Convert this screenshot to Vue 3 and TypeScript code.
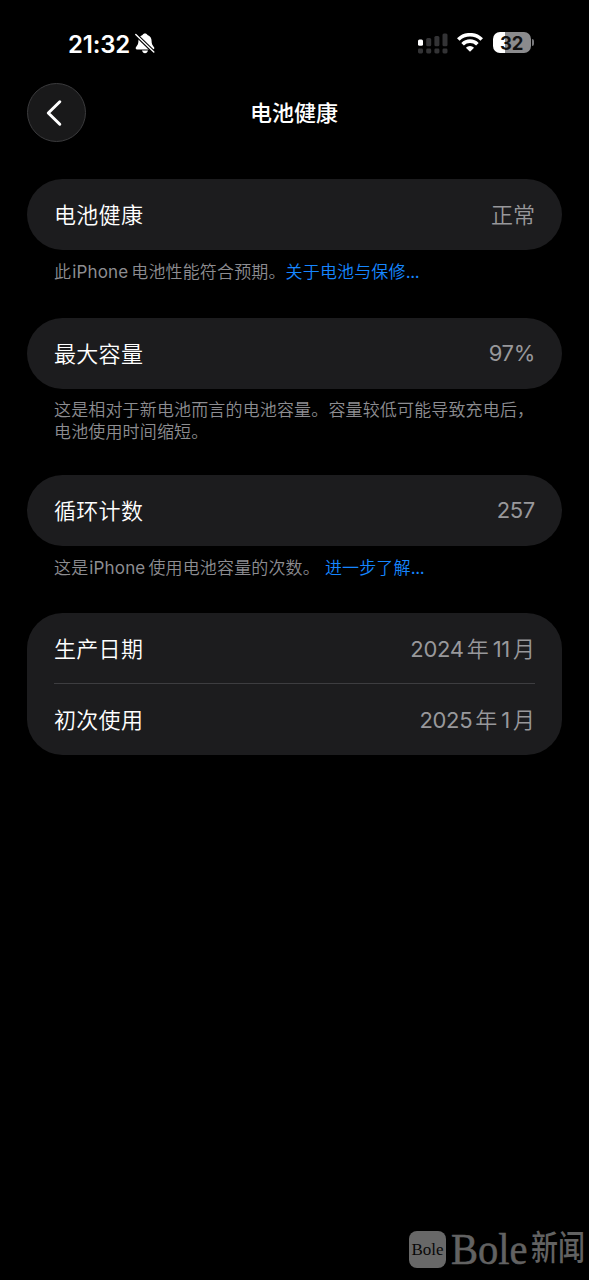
<script setup lang="ts">
interface Row {
  label: string
  value: string[]
}

interface Group {
  id: string
  rows: Row[]
  note?: string[]
  link?: string
  spaced?: boolean
}

const groups: Group[] = [
  {
    id: 'health',
    rows: [{ label: '电池健康', value: ['正常'] }],
    note: ['此', 'iPhone', '电池性能符合预期。'],
    link: '关于电池与保修',
  },
  {
    id: 'capacity',
    rows: [{ label: '最大容量', value: ['97%'] }],
    note: ['这是相对于新电池而言的电池容量。容量较低可能导致充电后，电池使用时间缩短。'],
  },
  {
    id: 'cycles',
    rows: [{ label: '循环计数', value: ['257'] }],
    note: ['这是', 'iPhone', '使用电池容量的次数。'],
    link: '进一步了解',
    spaced: true,
  },
  {
    id: 'dates',
    rows: [
      { label: '生产日期', value: ['2024', '年', '11', '月'] },
      { label: '初次使用', value: ['2025', '年', '1', '月'] },
    ],
  },
]

const isLatin = (text: string): boolean => /^[\x20-\x7e]+$/.test(text)
</script>

<template>
  <div class="screen">
    <header class="status">
      <div class="clock">
        <span class="time">21:32</span>
        <svg class="bell" width="20" height="21" viewBox="0 0 20 21">
          <path d="M10 0.4C8.8 .4 7.8 1 7.5 2C4.8 3 3.4 5.2 3.4 8C3.4 11.8 1.8 12.7 .9 14.3C.4 15.4 .8 16.4 2 16.4H18C19.2 16.4 19.6 15.4 19.1 14.3C18.2 12.7 16.6 11.8 16.6 8C16.6 5.2 15.2 3 12.5 2C12.2 1 11.2 .4 10 .4Z" fill="#fff" />
          <path d="M7 17.6H13C12.6 19.2 11.5 20.2 10 20.2S7.4 19.2 7 17.6Z" fill="#fff" />
          <path d="M.2 1L19.4 19.6" stroke="#000" stroke-width="3.6" />
          <path d="M.8 1.5L18.8 18.9" stroke="#fff" stroke-width="1.4" stroke-linecap="round" />
        </svg>
      </div>
      <div class="indicators">
        <svg class="signal" width="30" height="21" viewBox="0 0 30 21">
          <g fill="#333335">
            <rect x="8.2" y="5" width="5" height="8.3" rx="1.5" />
            <rect x="16.4" y="3" width="5" height="10.3" rx="1.5" />
            <rect x="24.5" y="0.4" width="5" height="12.9" rx="1.5" />
            <rect x="0" y="15.6" width="5" height="4.8" rx="1.4" />
            <rect x="8.2" y="15.6" width="5" height="4.8" rx="1.4" />
            <rect x="16.4" y="15.6" width="5" height="4.8" rx="1.4" />
            <rect x="24.5" y="15.6" width="5" height="4.8" rx="1.4" />
          </g>
          <rect x="0" y="6.5" width="5" height="6.2" rx="1.5" fill="#fff" />
        </svg>
        <svg class="wifi" width="26" height="19" viewBox="0 0 26 19">
          <g fill="none" stroke="#fff" stroke-width="3.7">
            <path d="M1.3 6.5A16.8 16.8 0 0 1 24.7 6.5" />
            <path d="M5.6 11.2A10.6 10.6 0 0 1 20.4 11.2" />
          </g>
          <path d="M8.9 14.7A5.9 5.9 0 0 1 17.1 14.7L13 18.8Z" fill="#fff" />
        </svg>
        <div class="battery">
          <div class="cell">32</div>
          <i class="nub"></i>
        </div>
      </div>
    </header>

    <nav class="nav">
      <button class="back" aria-label="返回">
        <svg width="18" height="28" viewBox="0 0 18 28">
          <path d="M14.8 2.8L3.3 14L14.8 25.2" fill="none" stroke="#fff" stroke-width="3" stroke-linecap="round" stroke-linejoin="round" />
        </svg>
      </button>
      <h1>电池健康</h1>
    </nav>

    <main>
      <section v-for="group in groups" :key="group.id" :class="['group', group.id]">
        <div class="card">
          <div v-for="row in group.rows" :key="row.label" class="row">
            <span class="label">{{ row.label }}</span>
            <span class="value"><span v-for="(part, i) in row.value" :key="i" :class="isLatin(part) ? 'num' : 'han'">{{ part }}</span></span>
          </div>
        </div>
        <p v-if="group.note" class="note"><span v-for="(part, i) in group.note" :key="i" :class="{ latin: isLatin(part) }">{{ part }}</span><a v-if="group.link" :class="{ spaced: group.spaced }">{{ group.link }}<span class="dots">...</span></a></p>
      </section>
    </main>

    <footer class="brand">
      <span class="badge">Bole</span>
      <span class="wordmark">Bole</span>
      <span class="news">新闻</span>
    </footer>
  </div>
</template>

<style>
body {
  background: #000;
}
</style>

<style scoped>
.screen {
  position: relative;
  box-sizing: border-box;
  width: 589px;
  height: 1280px;
  overflow: hidden;
  background: #000;
  color: #fff;
  font-family: Inter, "Noto Sans CJK SC", sans-serif;
}

.status {
  display: flex;
  justify-content: space-between;
  height: 83px;
  padding: 0 54px 0 68px;
  box-sizing: border-box;
}

.clock {
  display: flex;
  padding-top: 29px;
}

.time {
  width: 67px;
  font-size: 24px;
  font-weight: 600;
  line-height: 31px;
  letter-spacing: -0.2px;
}

.bell {
  margin-top: 4px;
}

.indicators {
  display: flex;
  padding-top: 32px;
}

.signal {
  margin: 1px 0 0 -1px;
}

.wifi {
  margin: 1px 10px 0 9px;
}

.battery {
  display: flex;
  align-items: center;
  height: 21px;
}

.cell {
  width: 38px;
  height: 21px;
  border-radius: 7px;
  background: linear-gradient(90deg, #fff 12px, #8b8b8d 12px);
  color: #111;
  font-size: 18.5px;
  font-weight: 650;
  line-height: 22px;
  text-align: center;
  letter-spacing: -0.3px;
}

.nub {
  width: 2px;
  height: 7px;
  margin: 0 1px 0 1.5px;
  border-radius: 0 2px 2px 0;
  background: #77777a;
}

.nav {
  display: grid;
  grid-template-columns: 59px 1fr 59px;
  align-items: center;
  height: 59px;
  margin: 0 27px 37px;
}

.back {
  display: flex;
  align-items: center;
  justify-content: center;
  box-sizing: border-box;
  width: 59px;
  height: 59px;
  padding: 0 5px 0 0;
  border: 1px solid #3b3b3d;
  border-radius: 50%;
  background: #19191a;
}

h1 {
  margin: 0 1px 0 0;
  padding-top: 1px;
  font-size: 22px;
  font-weight: 500;
  line-height: 32px;
  text-align: center;
}

.card {
  border-radius: 35.5px;
  background: #1c1c1e;
}

.group {
  height: 139px;
  margin: 0 27px;
}

.capacity {
  height: 157px;
}

.cycles {
  height: 138px;
}

.row {
  display: flex;
  align-items: center;
  justify-content: space-between;
  box-sizing: border-box;
  height: 71px;
  margin: 0 27px;
  padding-bottom: 3px;
}

.row + .row {
  border-top: 1px solid #3d3d40;
}

.dates .row:first-child {
  height: 70px;
}

.dates .row + .row {
  height: 72px;
  padding-bottom: 3px;
}

.label {
  font-size: 22px;
  font-weight: 350;
  letter-spacing: 0.3px;
}

.value {
  display: flex;
  align-items: baseline;
  color: #98989b;
  font-size: 22px;
  font-weight: 350;
}

.num {
  font-weight: 400;
  letter-spacing: -0.3px;
}

.num:only-child {
  padding-top: 2px;
}

.num + .han {
  margin-left: 3px;
}

.han + .num {
  margin-left: 4px;
}

.note {
  margin: 0;
  padding: 12px 20px 0 27px;
  color: #8d8d91;
  font-size: 17px;
  font-weight: 350;
  line-height: 21.5px;
  letter-spacing: 0.15px;
}

.capacity .note {
  padding-top: 11px;
}

.latin {
  margin: 0 3px 0 1px;
  font-weight: 400;
}

.note a {
  color: #1686ff;
}

.dots {
  font-weight: 400;
  letter-spacing: -0.3px;
}

.note .spaced {
  margin-left: 5px;
}

.brand {
  position: absolute;
  left: 409px;
  bottom: 9px;
  display: flex;
  align-items: center;
  height: 44px;
  color: #626262;
  font-family: "Liberation Serif", "Noto Sans CJK SC", serif;
}

.badge {
  width: 37px;
  height: 37px;
  border-radius: 8px;
  background: #686868;
  color: #080808;
  font-size: 17px;
  line-height: 37px;
  text-align: center;
}

.wordmark {
  width: 79px;
  margin-left: 5px;
  font-size: 45px;
  line-height: 44px;
  -webkit-text-stroke: 0.6px #626262;
  transform: scaleX(0.9);
  transform-origin: left;
}

.news {
  margin-left: 1px;
  font-size: 27px;
  font-weight: 500;
  line-height: 46px;
  transform: scaleY(1.25);
}
</style>
